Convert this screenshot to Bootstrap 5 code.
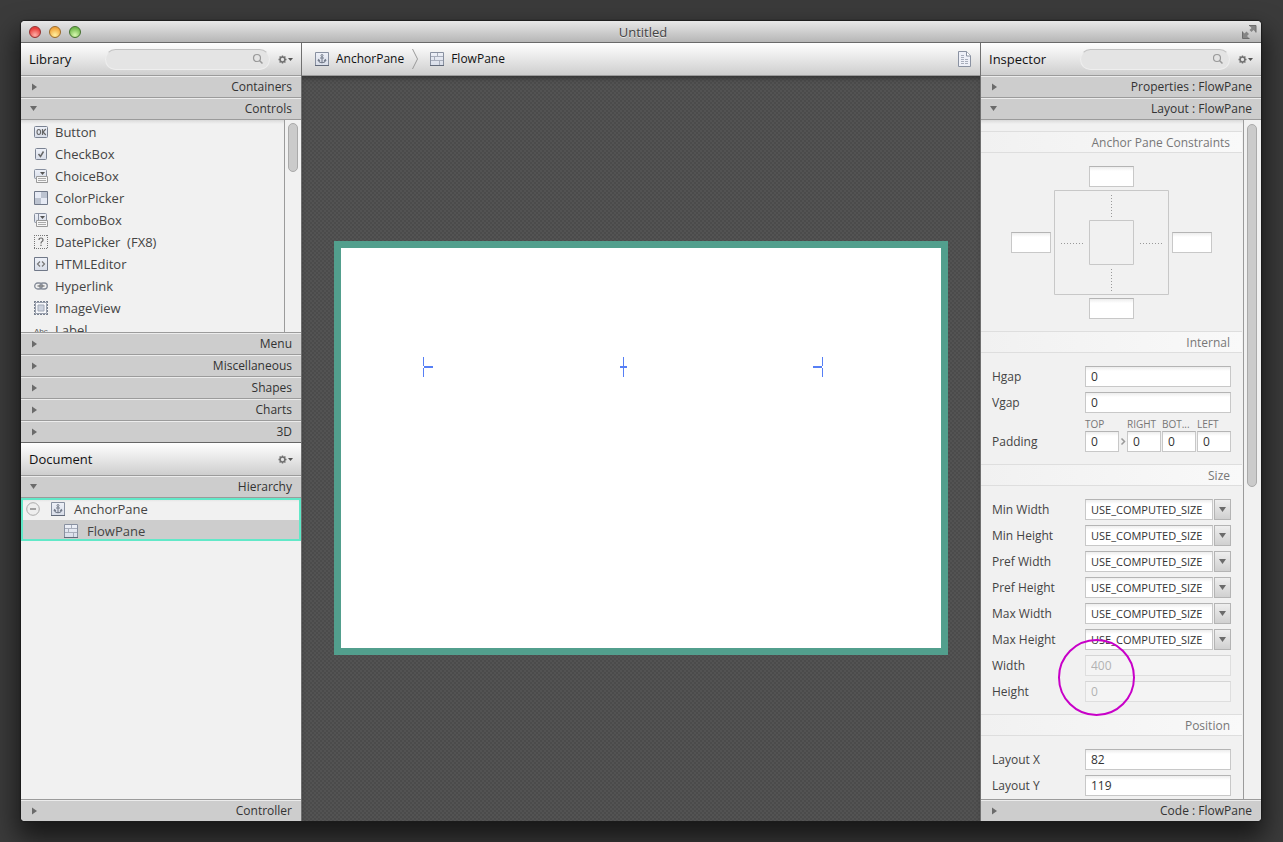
<!DOCTYPE html>
<html lang="en">
<head>
<meta charset="utf-8">
<meta name="viewport" content="width=device-width, initial-scale=1">
<title>Untitled</title>
<link href="https://cdn.jsdelivr.net/npm/bootstrap@5.3.0/dist/css/bootstrap.min.css" rel="stylesheet">
<style>
:root { --line: #9b9b9b; --bar: #cdcdcd; --pane: #f1f1f1; }
body { font-family: "Open Sans", "Noto Sans", sans-serif; font-size: 12px; line-height: 20px; color: #333; background: #3b3b3b; padding: 21px 22px 21px 21px; }
button { font: inherit; color: inherit; border: 0; background: none; padding: 0; }
svg { display: block; flex: none; }
.app-window { border-radius: 4px; box-shadow: 0 0 1px 1px #1c1c1c, 0 14px 26px 4px rgba(0,0,0,.6); background: var(--pane); }
.title-bar { height: 22px; background: linear-gradient(#e8e8e8, #b6b6b6); border-bottom: 1px solid #6a6a6a; padding: 0 4px; }
.title-bar h1 { font-size: 13px; line-height: 20px; color: #444; text-shadow: 0 1px 0 #e8e8e8; }
.light { width: 12px; height: 12px; border-radius: 50%; border: 1px solid; }
.light-red { background: radial-gradient(circle at 50% 80%, #ffb0a8, #e8403c 70%); border-color: #94302f; }
.light-amber { background: radial-gradient(circle at 50% 80%, #fff0a0, #f0a43a 75%); border-color: #9a6a28; }
.light-green { background: radial-gradient(circle at 50% 80%, #d8f8b0, #70b84c 75%); border-color: #44702f; }
.grow-even { flex: 1 1 0; }
.fit { min-width: 0; min-height: 0; }
.side { width: 281px; flex: none; }
.side-left { border-right: 1px solid #707070; }
.side-right { border-left: 1px solid #707070; }
.head { height: 33px; flex: none; background: linear-gradient(#fff, #cecece); border-bottom: 1px solid var(--line); padding: 0 8px; color: #111; }
.head h2 { font-size: 13px; line-height: 20px; }
.search-box { position: relative; width: 165px; height: 21px; }
.search-narrow { width: 150px; }
.search-box input { width: 100%; height: 21px; border: 1px solid #eee; border-top-color: #c2c2c2; border-radius: 11px; background: #e4e4e4; padding: 0 24px 0 8px; outline: 0; }
.search-box svg { position: absolute; right: 6px; top: 4px; }
.section-bar { height: 22px; flex: none; width: 100%; background: var(--bar); border-top: 1px solid #ececec; border-bottom: 1px solid var(--line); padding: 0 9px; line-height: 20px; }
.section-end { border-bottom-color: #666; }
.section-last { height: 21px; border-bottom: 0; }
.library-list { flex: 213 1 0; min-height: 0; border-bottom: 1px solid var(--line); }
.doc-tree { flex: 302 1 0; min-height: 0; border-bottom: 1px solid var(--line); }
.recess { background: linear-gradient(#dadada, var(--pane) 4px); }
.library-list ul { padding: 1px 0 0 13px; font-size: 13px; line-height: 22px; color: #444; }
.library-list li { height: 22px; gap: 7px; white-space: pre; }
.gutter { width: 17px; flex: none; border-left: 1px solid var(--line); padding: 3px 3px 0; background: var(--pane); }
.gutter-form { width: 18px; padding-top: 4px; }
.thumb { width: 10px; border: 1px solid #aaa; border-radius: 5px; background: #cbcbcb; }
.thumb-list { height: 49px; }
.thumb-form { height: 363px; }
.tree-box { outline: 2px solid #62e8c8; outline-offset: -2px; font-size: 13px; line-height: 20px; color: #444; }
.tree-row { height: 22px; gap: 9px; padding-left: 5px; }
.tree-row.chosen { background: var(--bar); padding-left: 43px; height: 21px; }
.crumbs { padding: 0 8px 0 13px; font-size: 12px; }
.crumbs a { gap: 7px; }
.crumb-sep { margin: 0 12px 0 8px; }
.canvas { background: #4f4f4f repeating-conic-gradient(#4b4b4b 0 25%, #535353 0 50%) 0 0 / 4px 4px; box-shadow: inset 0 4px 5px -2px #333; padding: 20px 20px 22px; }
.stage { width: 614px; height: 414px; border: 7px solid #529f8d; background: #fff; position: relative; }
.flow-node { position: absolute; left: 82px; top: 109px; width: 400px; }
.form-scroll { border-bottom: 1px solid var(--line); }
.form-body { padding-top: 11px; color: #444; }
.group-title { height: 22px; line-height: 22px; margin-right: 1px; padding-right: 12px; text-align: right; font-size: 12px; color: #777; border: 1px solid #dedede; border-width: 1px 0; background: linear-gradient(90deg, var(--pane), #f9f9f9); }
.group-rows { position: relative; padding: 13px 12px 12px 11px; display: grid; gap: 5px; }
.prop-row { display: grid; grid-template-columns: 93px 1fr; align-items: end; line-height: 21px; }
.field { width: 100%; min-width: 0; height: 21px; border: 1px solid #c8c8c8; border-top-color: #b4b4b4; background: linear-gradient(#ededed, #fff 4px); padding: 0 5px; color: #333; border-radius: 0; outline: 0; line-height: 19px; }
.field:disabled { opacity: .45; background: #f8f8f8; color: #666; }
.combo { display: grid; grid-template-columns: 1fr 17px; gap: 1px; }
.combo .field { font-size: 11px; }
.combo button { border: 1px solid #b4b4b4; background: linear-gradient(#eee, #d0d0d0); display: grid; place-items: center; }
.insets { display: grid; grid-template-columns: 1fr 8px 1fr 1px 1fr 1px 1fr; }
.insets label { font-size: 10px; line-height: 13px; color: #777; white-space: nowrap; }
.anchor-grid { display: grid; grid-template-columns: 40px 115px 40px; grid-template-rows: 21px 105px 21px; gap: 3px; justify-content: center; align-items: center; justify-items: center; padding: 13px 1px 12px 0; }
.field-v { width: 45px; }
.ring { position: absolute; left: 77px; top: 153px; pointer-events: none; }
</style>
<script src="https://cdn.jsdelivr.net/npm/bootstrap@5.3.0/dist/js/bootstrap.bundle.min.js"></script>
</head>
<body class="vh-100">
<svg width="0" height="0" class="position-absolute" aria-hidden="true">
  <defs>
    <linearGradient id="tile" x2="0" y2="1"><stop stop-color="#eef1f8"/><stop offset="1" stop-color="#d8dde8"/></linearGradient>
  </defs>
  <symbol id="anchor" viewBox="0 0 14 14"><path d="M.5.5h13v13H.5z" fill="url(#tile)" stroke="#8890a0"/><path d="M0 13.5h14" stroke="#626a7a"/><circle cx="7" cy="3.5" r="1" fill="none" stroke="#757d8c"/><path d="M7 4.5v6.5M5 6h4M3.500 8q.5 2.800 3.500 2.800T10.500 8M3 9.200l.5-1.500 1.500 1M11 9.200l-.5-1.500-1.500 1" fill="none" stroke="#757d8c" stroke-width="1.100"/></symbol>
  <symbol id="flow" viewBox="0 0 14 14"><path d="M.5.5h13v13H.5z" fill="url(#tile)" stroke="#8890a0"/><path d="M0 13.500h14" stroke="#626a7a"/><path d="M1 4.500h12M1 8.500h12M7.500 1v3M4.500 5v3M9.500 9v4" fill="none" stroke="#a8aebc"/></symbol>
  <symbol id="gear" viewBox="0 0 15 9"><circle cx="4.500" cy="4.500" r="2.400" fill="none" stroke="#707070" stroke-width="1.500"/><path d="M4.500.5v1.500M4.500 7v1.500M.5 4.500H2M7 4.500h1.500M1.600 1.600l1 1M6.400 6.400l1 1M1.600 7.400l1-1M6.400 2.600l1-1" stroke="#707070" stroke-width="1.400"/><path d="M10 3h5l-2.500 3z" fill="#555"/></symbol>
  <symbol id="loupe" viewBox="0 0 12 12"><circle cx="5" cy="5" r="3.500" fill="none" stroke="#999" stroke-width="1.200"/><path d="M7.500 7.500l3 3" stroke="#999" stroke-width="1.500"/></symbol>
  <symbol id="closed" viewBox="-2 0 8 8"><path d="M0 .5v7L5 4z" fill="#6b6b6b"/></symbol>
  <symbol id="opened" viewBox="0 0 8 6"><path d="M0 0h7L3.500 5z" fill="#6b6b6b"/></symbol>
</svg>

<div class="app-window h-100 d-flex flex-column overflow-hidden">
  <header class="title-bar d-flex align-items-center flex-shrink-0">
    <div class="d-flex gap-2 grow-even ps-1">
      <button class="light light-red" aria-label="Close"></button>
      <button class="light light-amber" aria-label="Minimize"></button>
      <button class="light light-green" aria-label="Zoom"></button>
    </div>
    <h1 class="m-0 fw-normal">Untitled</h1>
    <div class="d-flex justify-content-end grow-even">
      <button aria-label="Full screen"><svg width="15" height="14" viewBox="0 0 15 14"><path d="M7 .5h7v7l-2.500-2.500-2 2-2-2 2-2zM.5 6.500l2 2 2-2 2.500 2.500-2 2 2.500 2.500h-7z" fill="#858585"/><path d="M7 .5h7v7M.5 6.500v7h7" fill="none" stroke="#6c6c6c"/></svg></button>
    </div>
  </header>

  <div class="d-flex flex-fill fit">
    <aside class="side side-left d-flex flex-column">
      <div class="head d-flex align-items-center gap-2">
        <h2 class="m-0 fw-normal me-auto">Library</h2>
        <div class="search-box"><input type="search" aria-label="Search library"><svg width="12" height="12"><use href="#loupe"/></svg></div>
        <button aria-label="Library menu"><svg width="15" height="9"><use href="#gear"/></svg></button>
      </div>
      <button class="section-bar d-flex align-items-center justify-content-between"><svg width="8" height="8"><use href="#closed"/></svg><span>Containers</span></button>
      <button class="section-bar d-flex align-items-center justify-content-between" aria-expanded="true"><svg width="8" height="6"><use href="#opened"/></svg><span>Controls</span></button>
      <div class="library-list d-flex overflow-hidden">
        <ul class="recess list-unstyled m-0 flex-fill">
          <li class="d-flex align-items-center"><svg width="14" height="14"><rect x=".5" y="1.500" width="13" height="11" rx="1" fill="url(#tile)" stroke="#7a8292"/><ellipse cx="4.800" cy="7" rx="1.800" ry="2.500" fill="none" stroke="#666" stroke-width="1.100"/><path d="M8.500 4v6M11.800 4L9 7l2.800 3" stroke="#666" fill="none" stroke-width="1.200"/></svg>Button</li>
          <li class="d-flex align-items-center"><svg width="14" height="14"><rect x="1.500" y="1.500" width="11" height="11" rx="1" fill="url(#tile)" stroke="#7a8292"/><path d="M4.500 7l2 2.500 3-5" stroke="#666" fill="none" stroke-width="1.500"/></svg>CheckBox</li>
          <li class="d-flex align-items-center"><svg width="14" height="14"><rect x=".5" y=".5" width="12" height="9" rx="1" fill="url(#tile)" stroke="#8890a0"/><path d="M6 3h5L8.500 6z" fill="#555"/><path d="M2.500 7.500h11v6h-11z" fill="#f6f6f6" stroke="#999"/><path d="M4 9.500h8M4 11.500h8" stroke="#aaa"/></svg>ChoiceBox</li>
          <li class="d-flex align-items-center"><svg width="14" height="14"><path d="M.5.500h13v13H.5z" fill="#e6eaf4" stroke="#707888"/><path d="M7 1h6v6H7zM1 7h6v6H1z" fill="#bcc3d0"/></svg>ColorPicker</li>
          <li class="d-flex align-items-center"><svg width="14" height="14"><rect x=".5" y=".5" width="12" height="9" rx="1" fill="url(#tile)" stroke="#8890a0"/><path d="M4.500 1v6" stroke="#8890a0"/><path d="M6 3h5L8.500 6z" fill="#555"/><path d="M2.500 7.500h11v6h-11z" fill="#f6f6f6" stroke="#999"/><path d="M4 9.500h8M4 11.500h8" stroke="#aaa"/></svg>ComboBox</li>
          <li class="d-flex align-items-center"><svg width="14" height="14"><path d="M0 .500h14M0 13.500h14M.5 0v14M13.500 0v14" stroke="#777" stroke-dasharray="1 1"/><path d="M5 5q0-2 2-2t2 2q0 1-1 1.500T7 8.500M7 9.700v1.300" stroke="#666" fill="none" stroke-width="1.200"/></svg>DatePicker  (FX8)</li>
          <li class="d-flex align-items-center"><svg width="14" height="14"><path d="M.5.500h13v13H.5z" fill="url(#tile)" stroke="#707888"/><path d="M6 4.500L3.500 7 6 9.500M8 4.500L10.500 7 8 9.500" stroke="#777" fill="none" stroke-width="1.200"/></svg>HTMLEditor</li>
          <li class="d-flex align-items-center"><svg width="14" height="14"><rect x=".7" y="4" width="7.500" height="6" rx="3" fill="none" stroke="#858c98" stroke-width="1.300"/><rect x="5.800" y="4" width="7.500" height="6" rx="3" fill="none" stroke="#858c98" stroke-width="1.300"/><path d="M3.500 7h7" stroke="#777" stroke-width="1.300"/></svg>Hyperlink</li>
          <li class="d-flex align-items-center"><svg width="14" height="14"><path d="M0 .5h14M0 13.500h14M.5 0v14M13.500 0v14" stroke="#79818f" stroke-dasharray="2 1"/><path d="M1.500 1.500h11v11h-11z" fill="#f6f7fa" stroke="#9aa1ae"/><path d="M4 4h6v6H4z" fill="#ccd2de" stroke="#a2a9b6"/></svg>ImageView</li>
          <li class="d-flex align-items-center"><svg width="14" height="14"><text x="0" y="11" font-size="8" font-family="Liberation Sans, sans-serif" fill="#555">Abc</text></svg>Label</li>
        </ul>
        <div class="gutter"><div class="thumb thumb-list"></div></div>
      </div>
      <button class="section-bar d-flex align-items-center justify-content-between"><svg width="8" height="8"><use href="#closed"/></svg><span>Menu</span></button>
      <button class="section-bar d-flex align-items-center justify-content-between"><svg width="8" height="8"><use href="#closed"/></svg><span>Miscellaneous</span></button>
      <button class="section-bar d-flex align-items-center justify-content-between"><svg width="8" height="8"><use href="#closed"/></svg><span>Shapes</span></button>
      <button class="section-bar d-flex align-items-center justify-content-between"><svg width="8" height="8"><use href="#closed"/></svg><span>Charts</span></button>
      <button class="section-bar section-end d-flex align-items-center justify-content-between"><svg width="8" height="8"><use href="#closed"/></svg><span>3D</span></button>

      <div class="head d-flex align-items-center justify-content-between">
        <h2 class="m-0 fw-normal">Document</h2>
        <button aria-label="Document menu"><svg width="15" height="9"><use href="#gear"/></svg></button>
      </div>
      <button class="section-bar d-flex align-items-center justify-content-between" aria-expanded="true"><svg width="8" height="6"><use href="#opened"/></svg><span>Hierarchy</span></button>
      <div class="doc-tree">
        <div class="tree-box">
          <div class="tree-row recess d-flex align-items-center"><button aria-label="Collapse"><svg width="16" height="14"><circle cx="7" cy="7" r="6.300" fill="#eee" stroke="#aaa"/><path d="M4 7h6" stroke="#888" stroke-width="1.500"/></svg></button><svg width="14" height="14"><use href="#anchor"/></svg>AnchorPane</div>
          <div class="tree-row chosen d-flex align-items-center"><svg width="14" height="14"><use href="#flow"/></svg>FlowPane</div>
        </div>
      </div>
      <button class="section-bar section-last d-flex align-items-center justify-content-between"><svg width="8" height="8"><use href="#closed"/></svg><span>Controller</span></button>
    </aside>

    <main class="flex-fill d-flex flex-column fit">
      <nav class="head crumbs d-flex align-items-center" aria-label="Selection path">
        <a href="#" class="d-flex align-items-center text-reset text-decoration-none"><svg width="14" height="14"><use href="#anchor"/></svg>AnchorPane</a>
        <svg class="crumb-sep" width="6" height="22"><path d="M.5 1l5 10-5 10" fill="none" stroke="#999"/></svg>
        <a href="#" class="d-flex align-items-center text-reset text-decoration-none"><svg width="14" height="14"><use href="#flow"/></svg>FlowPane</a>
        <button class="ms-auto" aria-label="Document warnings"><svg width="14" height="16"><path d="M.5.500h8l4 4v11H.5z" fill="#eef0f8" stroke="#8a92a2"/><path d="M8.500.5v4.500H12.500" fill="#fff" stroke="#8a92a2"/><path d="M3 4.500h4M3 6.500h3M3 8.500h8M3 10.500h8M3 12.500h8" stroke="#a8aebc" stroke-dasharray="3 1"/></svg></button>
      </nav>
      <div class="canvas flex-fill d-flex align-items-center justify-content-center overflow-hidden">
        <div class="stage flex-shrink-0">
          <div class="flow-node d-flex justify-content-between">
            <svg width="10" height="20" fill="#567ff5"><path d="M0 0h1v9H0zM0 11h1v9H0zM1 9h9v2H1z"/></svg>
            <svg width="7" height="20" fill="#567ff5"><path d="M3 0h1v20H3zM0 9h7v2H0z"/></svg>
            <svg width="10" height="20" fill="#567ff5"><path d="M9 0h1v9H9zM9 11h1v9H9zM0 9h9v2H0z"/></svg>
          </div>
        </div>
      </div>
    </main>

    <aside class="side side-right d-flex flex-column">
      <div class="head d-flex align-items-center gap-2">
        <h2 class="m-0 fw-normal me-auto">Inspector</h2>
        <div class="search-box search-narrow"><input type="search" aria-label="Search properties"><svg width="12" height="12"><use href="#loupe"/></svg></div>
        <button aria-label="Inspector menu"><svg width="15" height="9"><use href="#gear"/></svg></button>
      </div>
      <button class="section-bar d-flex align-items-center justify-content-between"><svg width="8" height="8"><use href="#closed"/></svg><span>Properties : FlowPane</span></button>
      <button class="section-bar d-flex align-items-center justify-content-between" aria-expanded="true"><svg width="8" height="6"><use href="#opened"/></svg><span>Layout : FlowPane</span></button>
      <div class="form-scroll d-flex flex-fill fit overflow-hidden">
        <form class="form-body recess flex-fill">
          <div class="group-title">Anchor Pane Constraints</div>
          <div class="anchor-grid">
            <span></span><input class="field field-v" aria-label="Top anchor"><span></span>
            <input class="field" aria-label="Left anchor">
            <svg width="115" height="105" fill="none" stroke="#c8c8c8"><path d="M.5.500h114v104H.5zM35.500 30.500h44v44h-44z"/><path d="M57.500 5v23M57.500 79v23M7 53.500h23M86 53.500h23" stroke="#999" stroke-dasharray="1 2"/></svg>
            <input class="field" aria-label="Right anchor">
            <span></span><input class="field field-v" aria-label="Bottom anchor"><span></span>
          </div>
          <div class="group-title">Internal</div>
          <div class="group-rows">
            <div class="prop-row"><label for="hgap">Hgap</label><input class="field" id="hgap" value="0"></div>
            <div class="prop-row"><label for="vgap">Vgap</label><input class="field" id="vgap" value="0"></div>
            <div class="prop-row"><label for="pt">Padding</label>
              <div class="insets">
                <label for="pt">TOP</label><span></span><label for="pr">RIGHT</label><span></span><label for="pb">BOT...</label><span></span><label for="pl">LEFT</label>
                <input class="field" id="pt" value="0"><svg width="8" height="21"><path d="M2.500 7.500l3 3-3 3" fill="none" stroke="#999" stroke-width="1.500"/></svg><input class="field" id="pr" value="0"><span></span><input class="field" id="pb" value="0"><span></span><input class="field" id="pl" value="0">
              </div>
            </div>
          </div>
          <div class="group-title">Size</div>
          <div class="group-rows">
            <div class="prop-row"><label for="minw">Min Width</label><div class="combo"><input class="field" id="minw" value="USE_COMPUTED_SIZE"><button type="button" aria-label="Min Width choices"><svg width="8" height="6"><use href="#opened"/></svg></button></div></div>
            <div class="prop-row"><label for="minh">Min Height</label><div class="combo"><input class="field" id="minh" value="USE_COMPUTED_SIZE"><button type="button" aria-label="Min Height choices"><svg width="8" height="6"><use href="#opened"/></svg></button></div></div>
            <div class="prop-row"><label for="prefw">Pref Width</label><div class="combo"><input class="field" id="prefw" value="USE_COMPUTED_SIZE"><button type="button" aria-label="Pref Width choices"><svg width="8" height="6"><use href="#opened"/></svg></button></div></div>
            <div class="prop-row"><label for="prefh">Pref Height</label><div class="combo"><input class="field" id="prefh" value="USE_COMPUTED_SIZE"><button type="button" aria-label="Pref Height choices"><svg width="8" height="6"><use href="#opened"/></svg></button></div></div>
            <div class="prop-row"><label for="maxw">Max Width</label><div class="combo"><input class="field" id="maxw" value="USE_COMPUTED_SIZE"><button type="button" aria-label="Max Width choices"><svg width="8" height="6"><use href="#opened"/></svg></button></div></div>
            <div class="prop-row"><label for="maxh">Max Height</label><div class="combo"><input class="field" id="maxh" value="USE_COMPUTED_SIZE"><button type="button" aria-label="Max Height choices"><svg width="8" height="6"><use href="#opened"/></svg></button></div></div>
            <div class="prop-row"><label for="w">Width</label><input class="field" id="w" value="400" disabled></div>
            <div class="prop-row"><label for="h">Height</label><input class="field" id="h" value="0" disabled></div>
            <svg class="ring" width="77" height="77"><circle cx="38.500" cy="38.500" r="37.500" fill="none" stroke="#c800c8" stroke-width="2"/></svg>
          </div>
          <div class="group-title">Position</div>
          <div class="group-rows">
            <div class="prop-row"><label for="lx">Layout X</label><input class="field" id="lx" value="82"></div>
            <div class="prop-row"><label for="ly">Layout Y</label><input class="field" id="ly" value="119"></div>
          </div>
        </form>
        <div class="gutter gutter-form"><div class="thumb thumb-form"></div></div>
      </div>
      <button class="section-bar section-last d-flex align-items-center justify-content-between"><svg width="8" height="8"><use href="#closed"/></svg><span>Code : FlowPane</span></button>
    </aside>
  </div>
</div>
</body>
</html>
